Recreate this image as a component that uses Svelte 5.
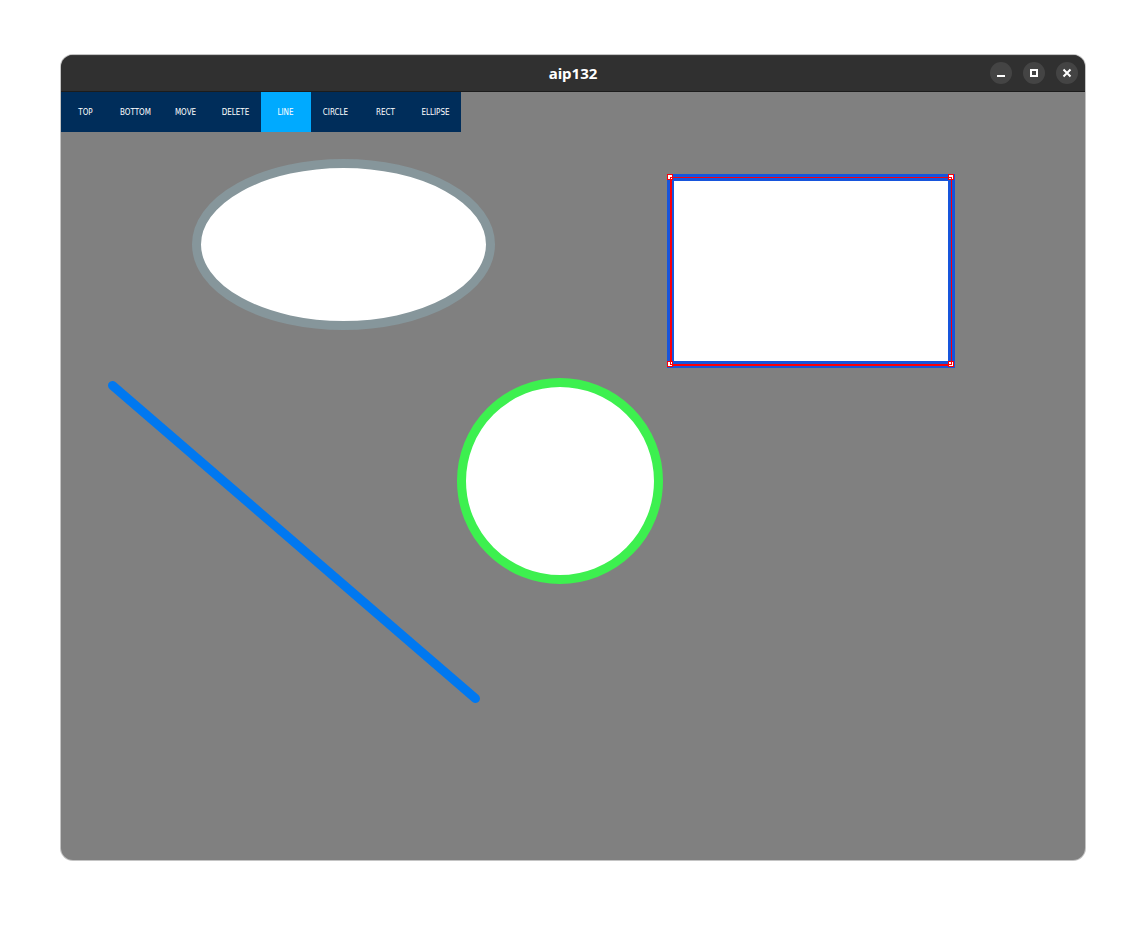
<script>
  const tools = ['TOP', 'BOTTOM', 'MOVE', 'DELETE', 'LINE', 'CIRCLE', 'RECT', 'ELLIPSE'];
  let active = $state('LINE');
</script>

<main>
  <section class="window">
    <header>
      <h1>aip132</h1>
      <div class="controls">
        <button aria-label="Minimize">
          <svg viewBox="0 0 22 22"><path d="M7 14h8" /></svg>
        </button>
        <button aria-label="Maximize">
          <svg viewBox="0 0 22 22"><rect x="8" y="8" width="6" height="6" /></svg>
        </button>
        <button aria-label="Close">
          <svg viewBox="0 0 22 22"><path d="M7.5 7.5l7 7M14.5 7.5l-7 7" /></svg>
        </button>
      </div>
    </header>

    <nav>
      {#each tools as tool}
        <button class:active={active === tool} onclick={() => (active = tool)}>{tool}</button>
      {/each}
    </nav>

    <svg class="canvas" viewBox="0 40 1024 728">
      <ellipse cx="282.5" cy="152.5" rx="147" ry="81" fill="#fff" stroke="#86969b" stroke-width="9" />
      <circle cx="499" cy="389" r="98.5" fill="#fff" stroke="#3df04f" stroke-width="9" />
      <path d="M51.5 293.5L414.5 606.5" stroke="#0078f0" stroke-width="9" stroke-linecap="round" />
      <rect x="609.5" y="85.5" width="281" height="187" fill="#fff" stroke="#1755dc" stroke-width="7" />

      <g fill="none" stroke="#fc0008" shape-rendering="crispEdges">
        <path d="M609 85.5H890.5V272" stroke-width="1" />
        <path d="M610 85V273H890" stroke-width="2" />
        <g fill="#fff" stroke-width="1">
          <rect x="606.5" y="82.5" width="5" height="5" />
          <rect x="887.5" y="82.5" width="5" height="5" />
          <rect x="606.5" y="269.5" width="5" height="5" />
          <rect x="887.5" y="269.5" width="5" height="5" />
        </g>
        <path d="M609.5 88V85.5H612M887 85.5h3.5V88M609.5 269v3.5H612M887 272.5h3.5V269" />
      </g>
    </svg>
  </section>
</main>

<style>
  :global(body) {
    margin: 0;
    background: #fff;
  }

  main {
    padding: 55px 61px 67px;
  }

  .window {
    overflow: hidden;
    border-radius: 12px;
    background: #808080;
    box-shadow: 0 0 0 1px #c4c4c4;
  }

  header {
    display: grid;
    grid-template-columns: 1fr auto 1fr;
    align-items: center;
    box-sizing: border-box;
    height: 37px;
    padding: 0 7px 1px;
    background: #303030;
    border-top: 1px solid #3b3b3b;
    border-bottom: 1px solid #1c1c1c;
  }

  h1 {
    grid-column: 2;
    margin: 0;
    color: #fff;
    font: bold 15px/20px "Noto Sans", sans-serif;
  }

  .controls {
    display: flex;
    justify-content: flex-end;
    gap: 11px;
  }

  .controls button {
    width: 22px;
    height: 22px;
    padding: 0;
    border: 0;
    border-radius: 50%;
    background: #444;
  }

  .controls svg {
    display: block;
    fill: none;
    stroke: #fff;
    stroke-width: 2;
  }

  nav {
    display: flex;
  }

  nav button {
    width: 50px;
    height: 40px;
    padding: 2px 1px 0 0;
    border: 0;
    background: #002d5a;
    color: #fff;
    font: 8px/12px "DejaVu Sans Condensed", "Roboto", sans-serif;
  }

  nav button.active {
    background: #00aaff;
  }

  .canvas {
    display: block;
    width: 100%;
  }
</style>
